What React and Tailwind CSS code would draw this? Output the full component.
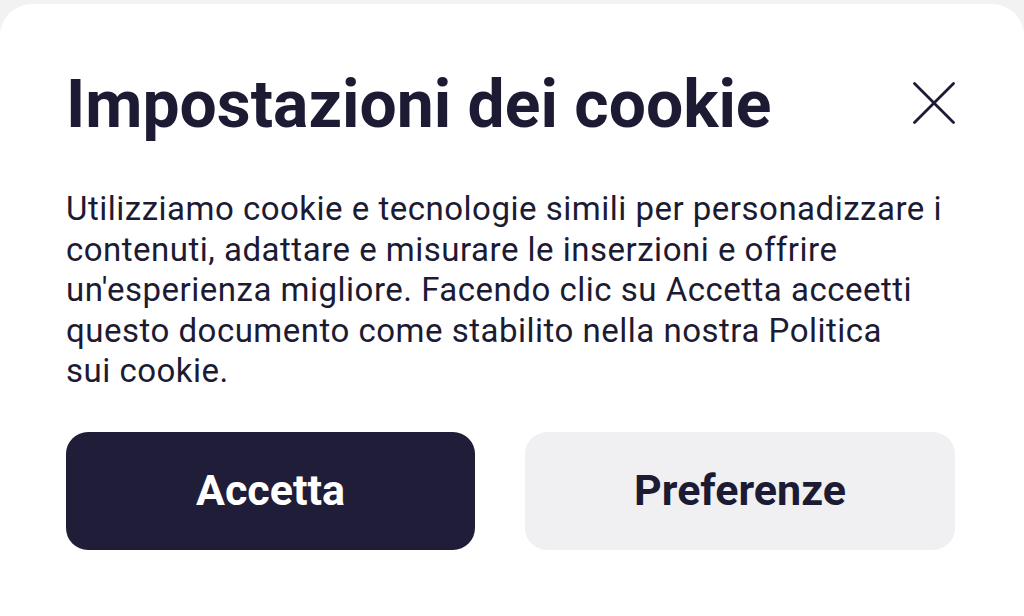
import React from "react";

export default function App() {
  return (
    <div className="h-[616px] w-[1024px] overflow-hidden bg-[#f2f2f2] pt-[4px] font-['Roboto',sans-serif]">
      <div className="h-full rounded-t-[32px] bg-white pl-[66px] pr-[69px] pt-[65px]">
        <div className="flex items-start justify-between">
          <h1 className="text-[66px] font-bold leading-[72px] text-[#1c1b33]">
            Impostazioni dei cookie
          </h1>
          <button className="mt-[13px] h-[42px] w-[42px] text-[#1c1b33]">
            <svg viewBox="0 0 42 42" className="h-[42px] w-[42px]" fill="none" stroke="currentColor" strokeWidth="2.8" strokeLinecap="round">
              <path d="M1.5 1.5 L40.5 40.5" />
              <path d="M40.5 1.5 L1.5 40.5" />
            </svg>
          </button>
        </div>

        <p className="mt-[48px] text-[33px] leading-[40.5px] tracking-[0.5px] text-[#1c1b33]">
          Utilizziamo cookie e tecnologie simili per personadizzare i
          <br />
          contenuti, adattare e misurare le inserzioni e offrire
          <br />
          un'esperienza migliore. Facendo clic su Accetta acceetti
          <br />
          questo documento come stabilito nella nostra Politica
          <br />
          sui cookie.
        </p>

        <div className="mt-[40px] flex gap-[50px]">
          <button className="h-[118px] w-[409px] rounded-[22px] bg-[#1f1d38] text-[43px] font-bold text-white">
            Accetta
          </button>
          <button className="h-[118px] w-[430px] rounded-[22px] bg-[#f0f0f3] text-[43px] font-bold text-[#1c1b33]">
            Preferenze
          </button>
        </div>
      </div>
    </div>
  );
}
